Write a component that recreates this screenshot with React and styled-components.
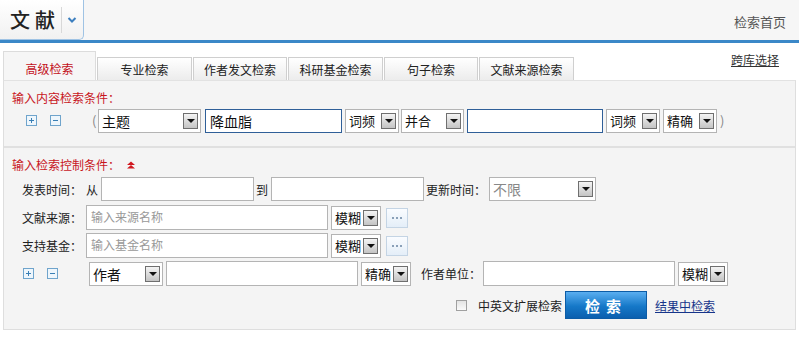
import styled, { createGlobalStyle } from "styled-components";

const GlobalStyle = createGlobalStyle`
  body {
    margin: 0;
    background: #fff;
    font-family: "Noto Sans CJK SC", "Liberation Sans", sans-serif;
    font-size: 12px;
    color: #333;
  }
`

const Page = styled.div`
  width: 799px;
  height: 342px;
  overflow: hidden;
  background: #fff;
`

const Header = styled.header`
  height: 40px;
  display: flex;
  align-items: stretch;
  justify-content: space-between;
  background: #f6f6f6;
  border-bottom: 3px solid #3b88c8;
`

const Logo = styled.div`
  width: 83px;
  display: flex;
  align-items: center;
  background: linear-gradient(#fff, #f1f1f1);
  border: 1px solid #9fc3e4;
  border-left: none;
  border-top: none;
  border-bottom-right-radius: 5px;
  h1 {
    margin: 0 0 0 10px;
    font-size: 20px;
    font-weight: 500;
    letter-spacing: 5px;
    color: #222;
    padding-right: 1px;
    border-right: 1px solid #d8d8d8;
    line-height: 26px;
  }
  svg {
    margin-left: 5px;
  }
`

const HomeLink = styled.a`
  align-self: center;
  margin-right: 13px;
  margin-top: 2px;
  font-size: 13px;
  color: #555;
  text-decoration: none;
`

const TabBar = styled.div`
  height: 37px;
  display: flex;
  align-items: flex-end;
  padding-left: 3px;
`

const Tab = styled.div`
  width: ${p => p.$w}px;
  height: ${p => (p.$active ? 29 : 23)}px;
  box-sizing: border-box;
  display: flex;
  align-items: center;
  justify-content: center;
  padding-top: ${p => (p.$active ? 4 : 0)}px;
  border: 1px solid ${p => (p.$active ? "#dcdcdc" : "#cfcfcf")};
  border-bottom: none;
  margin-right: 1px;
  background: ${p => (p.$active ? "#f6f6f6" : "linear-gradient(#fff, #ececec)")};
  color: ${p => (p.$active ? "#c3101a" : "#222")};
  font-size: 12px;
`

const CrossLink = styled.a`
  margin-left: auto;
  align-self: flex-start;
  margin-top: 8px;
  margin-right: 20px;
  font-size: 12px;
  color: #333;
  text-decoration: underline;
`

const Panel = styled.section`
  margin: 0 3px;
  height: 250px;
  box-sizing: border-box;
  background: #f4f4f4;
  border: 1px solid #dedede;
  border-top-color: #e2e2e2;
`

const Block = styled.div`
  padding: ${p => p.$pad};
  border-bottom: ${p => (p.$sep ? "2px solid #e0e0e0" : "none")};
`

const Title = styled.div`
  display: flex;
  align-items: center;
  gap: 6px;
  color: #c8161d;
  font-size: 12px;
  line-height: 14px;
  padding-left: 8px;
`

const Row = styled.div`
  display: flex;
  align-items: center;
  height: ${p => p.$h || 24}px;
  margin-top: ${p => p.$mt || 0}px;
  padding-left: ${p => p.$pl || 0}px;
`

const Gap = styled.span`
  width: ${p => p.$w}px;
  flex-shrink: 0;
`

const Label = styled.span`
  width: ${p => (p.$w ? `${p.$w}px` : "auto")};
  flex-shrink: 0;
  white-space: nowrap;
  font-size: 12px;
  color: #222;
`

const Paren = styled.span`
  width: 6px;
  color: #888;
  font-size: 13px;
`

const Field = styled.div`
  width: ${p => p.$w}px;
  height: ${p => p.$h || 24}px;
  box-sizing: border-box;
  background: #fff;
  border: 1px solid ${p => (p.$blue ? "#2f5f98" : "#b4b4b4")};
  font-size: ${p => p.$fs || 14}px;
  color: ${p => (p.$ph ? "#999" : "#111")};
  padding: 2px 4px;
  line-height: 18px;
  flex-shrink: 0;
`

const SelectBox = styled.div`
  width: ${p => p.$w}px;
  height: 24px;
  box-sizing: border-box;
  display: flex;
  align-items: center;
  justify-content: space-between;
  background: #fff;
  border: 1px solid #b4b4b4;
  padding: 0 2px 0 3px;
  font-size: ${p => p.$fs}px;
  white-space: nowrap;
  color: ${p => (p.$muted ? "#888" : "#111")};
  flex-shrink: 0;
`

const Drop = styled.span`
  width: 15px;
  height: 16px;
  flex-shrink: 0;
  box-sizing: border-box;
  display: flex;
  align-items: center;
  justify-content: center;
  border: 1px solid #6f6f6f;
  background: linear-gradient(#f4f4f4, #c4c4c4);
  &::after {
    content: "";
    border-left: 4px solid transparent;
    border-right: 4px solid transparent;
    border-top: 4px solid #111;
  }
`

const MoreBtn = styled.span`
  width: 22px;
  height: 20px;
  box-sizing: border-box;
  display: flex;
  align-items: center;
  justify-content: center;
  gap: 2px;
  border: 1px solid #c4d4e4;
  background: linear-gradient(#fafcff, #e4eef8);
  i {
    width: 2px;
    height: 2px;
    background: #8aa0b8;
  }
`

const SearchBtn = styled.button`
  width: 82px;
  height: 28px;
  flex-shrink: 0;
  border: 1px solid #0c5ca6;
  background: linear-gradient(#5aaef0, #1578c8 55%, #0b5fae);
  color: #fff;
  font-family: inherit;
  font-size: 15px;
  font-weight: 700;
  letter-spacing: 6px;
  padding-left: 6px;
`

const Check = styled.span`
  width: 11px;
  height: 11px;
  flex-shrink: 0;
  box-sizing: border-box;
  border: 1px solid #a0a0a0;
  background: linear-gradient(#e4e4e4, #fafafa);
`

const ResultLink = styled.a`
  color: #16358a;
  text-decoration: underline;
  font-size: 12px;
  white-space: nowrap;
`

const PlusMinus = ({ minus }) => (
  <svg width="11" height="11" viewBox="0 0 11 11">
    <rect x="0.5" y="0.5" width="10" height="10" fill="#eef6fc" stroke="#6fa4cc" />
    <path d="M3 5.5h5" stroke="#3a7fb5" />
    {!minus && <path d="M5.5 3v5" stroke="#3a7fb5" />}
  </svg>
)

const Select = ({ w, children, muted, fs = 14 }) => (
  <SelectBox $w={w} $muted={muted} $fs={fs}>
    <span>{children}</span>
    <Drop />
  </SelectBox>
)

const Dots = () => (
  <MoreBtn><i /><i /><i /></MoreBtn>
)

const tabs = [
  ["高级检索", 93],
  ["专业检索", 95],
  ["作者发文检索", 94],
  ["科研基金检索", 95],
  ["句子检索", 94],
  ["文献来源检索", 95],
]

export default function App() {
  return (
    <Page>
      <GlobalStyle />
      <Header>
        <Logo>
          <h1>文献</h1>
          <svg width="10" height="8" viewBox="0 0 10 8">
            <path d="M1.5 2l3.5 3.5L8.5 2" fill="none" stroke="#3d7fbf" strokeWidth="2" />
          </svg>
        </Logo>
        <HomeLink>检索首页</HomeLink>
      </Header>

      <TabBar>
        {tabs.map(([t, w], i) => (
          <Tab key={t} $w={w} $active={i === 0}>{t}</Tab>
        ))}
        <CrossLink>跨库选择</CrossLink>
      </TabBar>

      <Panel>
        <Block $pad="10px 0 14px" $sep>
          <Title>输入内容检索条件：</Title>
          <Row $mt={4} $h={23} $pl={22}>
            <PlusMinus />
            <Gap $w={13} />
            <PlusMinus minus />
            <Gap $w={31} />
            <Paren>(</Paren>
            <Select w={103}>主题</Select>
            <Gap $w={4} />
            <Field $w={137} $blue>降血脂</Field>
            <Gap $w={3} />
            <Select w={54} fs={13}>词频</Select>
            <Gap $w={2} />
            <Select w={63} fs={13}>并合</Select>
            <Gap $w={3} />
            <Field $w={136} $blue />
            <Gap $w={3} />
            <Select w={54} fs={13}>词频</Select>
            <Gap $w={3} />
            <Select w={54} fs={13}>精确</Select>
            <Gap $w={3} />
            <Paren>)</Paren>
          </Row>
        </Block>

        <Block $pad="10px 0 0">
          <Title>
            输入检索控制条件：
            <svg width="10" height="8" viewBox="0 0 10 8">
              <path d="M1 4l4-3.5L9 4z M1 7.5l4-3.5 4 3.5z" fill="#d0181f" />
            </svg>
          </Title>
          <Row $mt={5} $pl={18}>
            <Label $w={64}>发表时间：</Label>
            <Label $w={15}>从</Label>
            <Field $w={153} />
            <Gap $w={2} />
            <Label $w={15}>到</Label>
            <Field $w={153} />
            <Gap $w={2} />
            <Label $w={63}>更新时间：</Label>
            <Select w={107} muted>不限</Select>
          </Row>
          <Row $mt={4} $h={25} $pl={18}>
            <Label $w={64}>文献来源：</Label>
            <Field $w={242} $h={25} $ph $fs={12}>输入来源名称</Field>
            <Gap $w={3} />
            <Select w={50} fs={13}>模糊</Select>
            <Gap $w={5} />
            <Dots />
          </Row>
          <Row $mt={3} $h={25} $pl={18}>
            <Label $w={64}>支持基金：</Label>
            <Field $w={242} $h={25} $ph $fs={12}>输入基金名称</Field>
            <Gap $w={3} />
            <Select w={50} fs={13}>模糊</Select>
            <Gap $w={5} />
            <Dots />
          </Row>
          <Row $mt={3} $h={25} $pl={19}>
            <PlusMinus />
            <Gap $w={13} />
            <PlusMinus minus />
            <Gap $w={31} />
            <Select w={74}>作者</Select>
            <Gap $w={3} />
            <Field $w={192} $h={25} />
            <Gap $w={3} />
            <Select w={50} fs={13}>精确</Select>
            <Gap $w={10} />
            <Label $w={62}>作者单位：</Label>
            <Field $w={192} $h={25} />
            <Gap $w={3} />
            <Select w={50} fs={13}>模糊</Select>
          </Row>
          <Row $mt={5} $h={28} $pl={452}>
            <Check />
            <Gap $w={11} />
            <Label>中英文扩展检索</Label>
            <Gap $w={3} />
            <SearchBtn>检索</SearchBtn>
            <Gap $w={8} />
            <ResultLink>结果中检索</ResultLink>
          </Row>
        </Block>
      </Panel>
    </Page>
  )
}
